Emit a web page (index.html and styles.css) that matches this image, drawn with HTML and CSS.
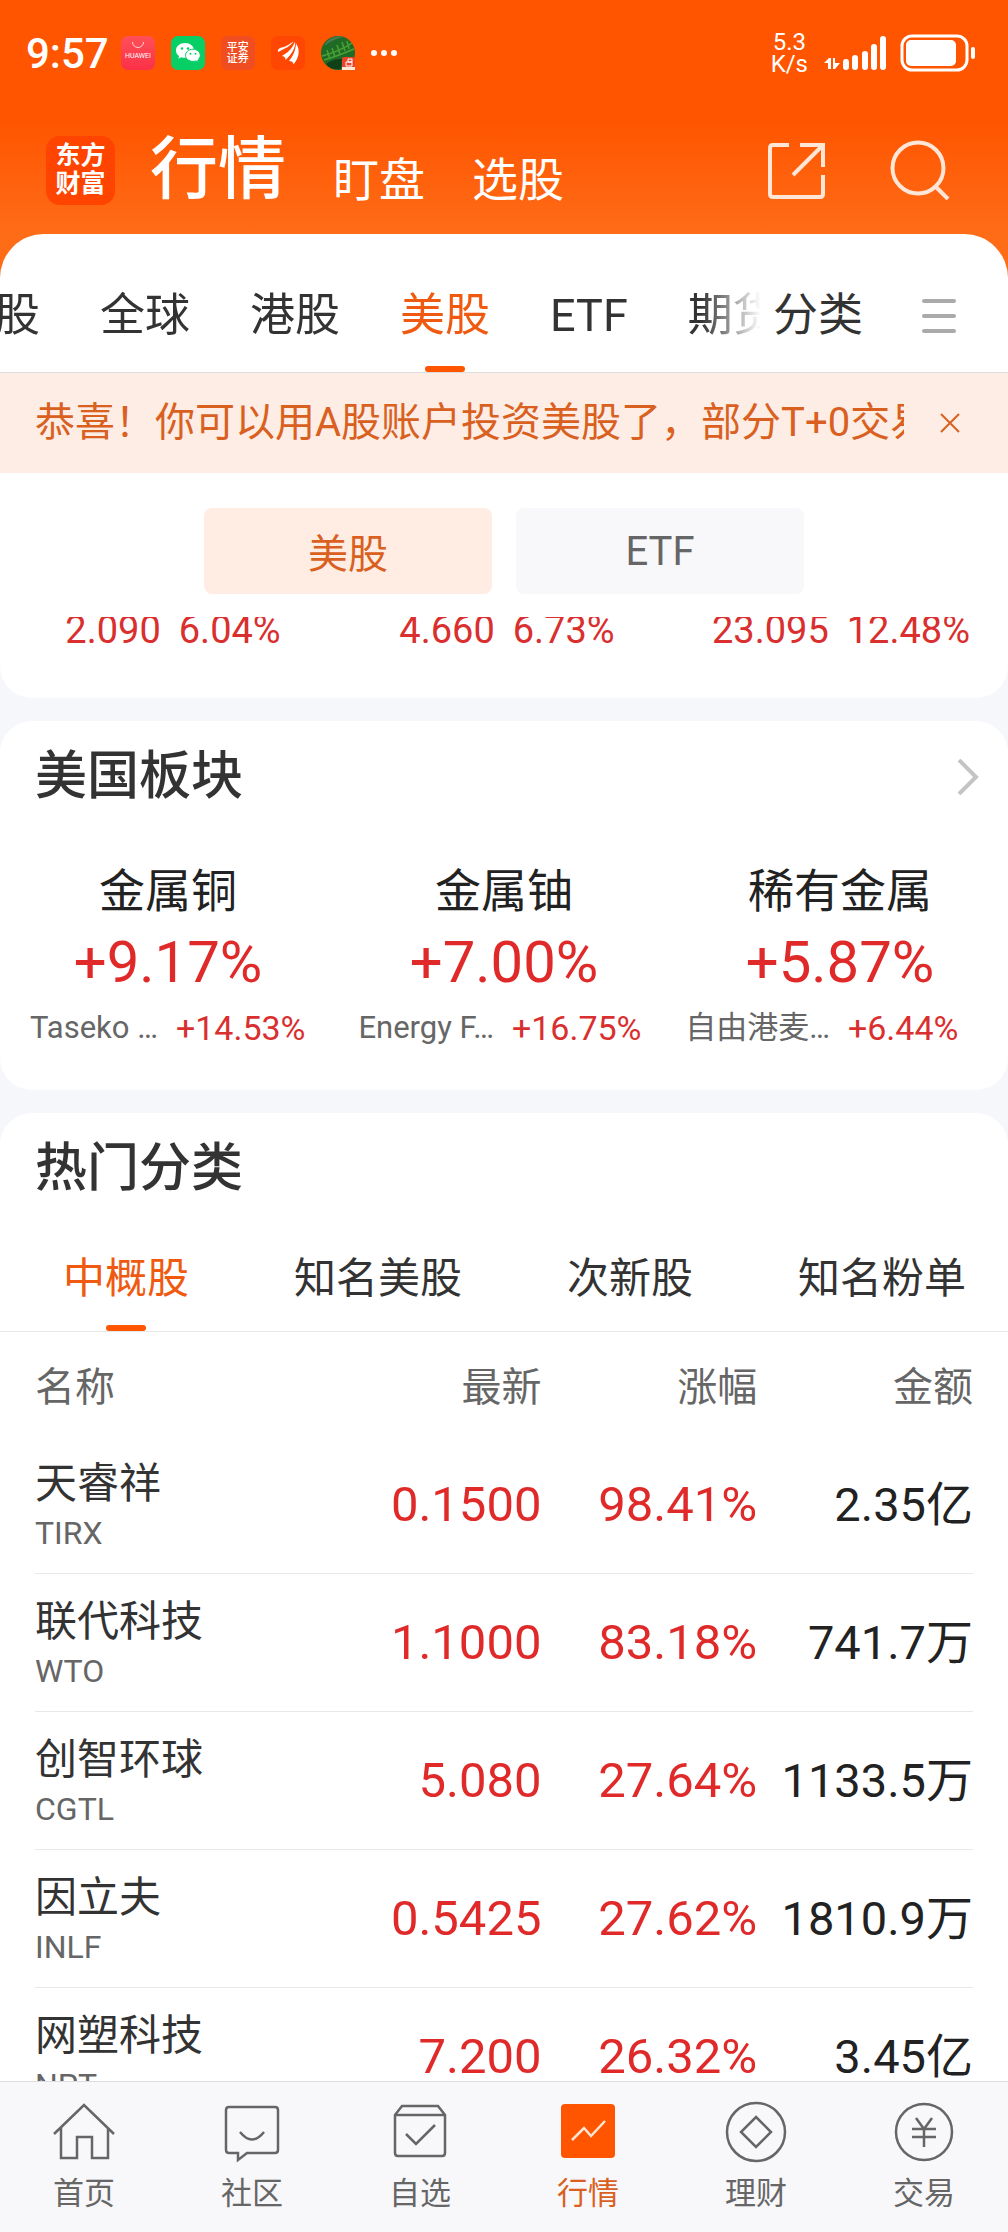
FILE: index.html
```html
<!DOCTYPE html>
<html lang="zh-CN">
<head>
    <meta charset="UTF-8">
    <meta name="viewport" content="width=device-width, initial-scale=1.0">
    <title>行情 | 东方财富</title>
    <link rel="stylesheet" href="styles.css">
</head>
<body>

    <header class="top">
        <div class="status-bar">
            <span class="time">9:57</span>
            <div class="notifications">
                <svg class="app-icon" viewBox="0 0 34 34">
                    <defs>
                        <linearGradient id="pink" x1="0" y1="0" x2="0" y2="1">
                            <stop offset="0" stop-color="#ff5058"/>
                            <stop offset="1" stop-color="#fb3048"/>
                        </linearGradient>
                    </defs>
                    <rect width="34" height="34" rx="7" fill="url(#pink)"/>
                    <path d="M11.500 6a5.500 5.500 0 0 0 11 0" fill="none" stroke="#ffd5d5" stroke-width="1"/>
                    <text x="17" y="22" class="huawei">HUAWEI</text>
                </svg>
                <svg class="app-icon" viewBox="0 0 34 34">
                    <rect width="34" height="34" rx="7" fill="#07cf66"/>
                    <path d="M14 7c-5.200 0-9 3.300-9 7.400 0 2.400 1.200 4.300 3.100 5.700l-.8 2.600 3-1.500c1.200.4 2.400.6 3.700.6 5.200 0 9-3.300 9-7.400S19.200 7 14 7z" fill="#fff"/>
                    <path d="M22 13.200c-4.300 0-7.500 2.800-7.500 6.100s3.200 6.100 7.500 6.100c1 0 2-.2 2.900-.5l2.600 1.400-.7-2.300c1.500-1.200 2.500-2.800 2.500-4.700 0-3.300-3-6.100-7.300-6.100z" fill="#fff" stroke="#07cf66" stroke-width="1"/>
                    <g fill="#07cf66">
                        <circle cx="11" cy="12.500" r="1.200"/><circle cx="17" cy="12.500" r="1.200"/>
                        <circle cx="19.500" cy="17.800" r="1"/><circle cx="24.500" cy="17.800" r="1"/>
                    </g>
                </svg>
                <span class="app-icon pingan">平安<br>证券</span>
                <svg class="app-icon" viewBox="0 0 34 34">
                    <rect width="34" height="34" rx="7" fill="#ff4602"/>
                    <g fill="#fff">
                        <path d="M7 16c-.6-3.500 1.600-4 5-4.800C16 10 19 8 22.500 5.200 20 10 14 12.500 7 16z"/>
                        <path d="M11 20c5-3 10-7 13-14.300 1 5.300-3 12.300-9.600 18.300.3-2-.6-3.400-3.400-4z"/>
                        <path d="M18 25c4-5 6.500-10 7-17.500C29.600 14 28 22 22.400 28.500c.2-2.300-1.400-3.400-4.400-3.500z"/>
                    </g>
                </svg>
                <svg class="app-icon" viewBox="0 0 34 34">
                    <circle cx="17" cy="17" r="17" fill="#1f6b26"/>
                    <path d="M3 10a17 17 0 0 1 20-9c-8 1-14 5-20 9z" fill="#4a7a50"/>
                    <g fill="none" stroke="#4aa035" stroke-width="1.500">
                        <path d="M1 20C10 18 24 12 31 7M3 24C14 21 26 16 33 13"/>
                        <path d="M6 14l3 9M11 12l3 9M16 9l3 9M21 6l3 9M26 5l2 8"/>
                    </g>
                    <path d="M5 28c5-4 10-5 16-5l-1 10C14 34 9 33 5 28z" fill="#0f4018"/>
                    <rect x="21" y="21" width="13" height="13" rx="2" fill="#e8452c"/>
                    <path d="M21 31h13v3H21z" fill="#ffe9d8"/>
                    <path d="M25 26h6v4h-6zM27 23h4v3h-4z" fill="none" stroke="#fff" stroke-width="1"/>
                </svg>
                <svg class="more-dots" viewBox="0 0 26 6" fill="#fff">
                    <circle cx="3" cy="3" r="3"/><circle cx="13" cy="3" r="3"/><circle cx="23" cy="3" r="3"/>
                </svg>
            </div>
            <span class="net-speed">5.3<br>K/s</span>
            <svg class="signal" viewBox="0 0 62 36" fill="#fff">
                <path d="M0 28l5-5h2v11H4v-6zM9 23h2v5h5l-5 6H9z"/>
                <rect x="19" y="24" width="6" height="11" rx="3"/>
                <rect x="28" y="20" width="6" height="15" rx="3"/>
                <rect x="38" y="16" width="6" height="19" rx="3"/>
                <rect x="47" y="9" width="6" height="26" rx="3"/>
                <rect x="56" y="1" width="6" height="34" rx="3"/>
            </svg>
            <svg class="battery" viewBox="0 0 76 38">
                <rect x="2" y="2" width="65" height="34" rx="10" fill="none" stroke="#fff" stroke-width="3"/>
                <rect x="6" y="6" width="50" height="26" rx="5" fill="#fff"/>
                <rect x="71" y="13" width="4" height="12" rx="2" fill="#fff"/>
            </svg>
        </div>

        <div class="app-bar">
            <a href="#" class="logo">东方<br>财富</a>
            <nav class="sections">
                <a href="#" class="current">行情</a>
                <a href="#">盯盘</a>
                <a href="#">选股</a>
            </nav>
            <button class="icon-button" aria-label="分享">
                <svg class="bar-icon" viewBox="0 0 60 60" fill="none" stroke="#ffe6d6" stroke-width="4">
                    <path d="M23 5H7q-3 0-3 3v46q0 3 3 3h47q3 0 3-3V35M34 5h23v22M56 6L27 35"/>
                </svg>
            </button>
            <button class="icon-button" aria-label="搜索">
                <svg class="bar-icon" viewBox="0 0 60 60" fill="none" stroke="#ffe6d6" stroke-width="4">
                    <circle cx="28" cy="28" r="25.500"/>
                    <path d="M46 47l12 12"/>
                </svg>
            </button>
        </div>
    </header>

    <main class="content">
        <nav class="market-tabs">
            <div class="tab-scroller">
                <a href="#">股</a>
                <a href="#">全球</a>
                <a href="#">港股</a>
                <a href="#" class="active">美股</a>
                <a href="#">ETF</a>
                <a href="#">期货</a>
            </div>
            <a href="#" class="category">分类</a>
            <button class="menu-button" aria-label="菜单">
                <svg viewBox="0 0 34 34" stroke="#aaa" stroke-width="4" stroke-linecap="round">
                    <path d="M2 2h30M2 17h30M2 32h30"/>
                </svg>
            </button>
        </nav>

        <div class="notice">
            <p>恭喜！你可以用A股账户投资美股了，部分T+0交易</p>
            <button aria-label="关闭">
                <svg viewBox="0 0 20 20" stroke="#d9601f" stroke-width="2">
                    <path d="M1 1l18 18M19 1L1 19"/>
                </svg>
            </button>
        </div>

        <section class="card quotes">
            <div class="switch">
                <button class="selected">美股</button>
                <button>ETF</button>
            </div>
            <div class="quote-clip">
                <div class="quote-row">
                    <p><span>2.090</span><span>6.04%</span></p>
                    <p><span>4.660</span><span>6.73%</span></p>
                    <p><span>23.095</span><span>12.48%</span></p>
                </div>
            </div>
        </section>

        <section class="card">
            <div class="card-title">
                <h2>美国板块</h2>
                <a href="#" aria-label="更多">
                    <svg viewBox="0 0 22 36" fill="none" stroke="#c4c4c4" stroke-width="4">
                        <path d="M2 1l17 17L2 35"/>
                    </svg>
                </a>
            </div>
            <div class="sectors">
                <div class="sector">
                    <h3>金属铜</h3>
                    <p class="sector-change">+9.17%</p>
                    <p class="leader"><span>Taseko …</span><b>+14.53%</b></p>
                </div>
                <div class="sector">
                    <h3>金属铀</h3>
                    <p class="sector-change">+7.00%</p>
                    <p class="leader"><span>Energy F…</span><b>+16.75%</b></p>
                </div>
                <div class="sector">
                    <h3>稀有金属</h3>
                    <p class="sector-change">+5.87%</p>
                    <p class="leader"><span>自由港麦…</span><b>+6.44%</b></p>
                </div>
            </div>
        </section>

        <section class="card">
            <div class="card-title">
                <h2>热门分类</h2>
            </div>
            <nav class="hot-tabs">
                <a href="#" class="active">中概股</a>
                <a href="#">知名美股</a>
                <a href="#">次新股</a>
                <a href="#">知名粉单</a>
            </nav>
            <div class="table-wrap">
                <table class="stocks">
                    <thead>
                        <tr><th>名称</th><th>最新</th><th>涨幅</th><th>金额</th></tr>
                    </thead>
                    <tbody>
                        <tr>
                            <td>天睿祥<small>TIRX</small></td>
                            <td class="up">0.1500</td><td class="up">98.41%</td><td class="amount">2.35亿</td>
                        </tr>
                        <tr>
                            <td>联代科技<small>WTO</small></td>
                            <td class="up">1.1000</td><td class="up">83.18%</td><td class="amount">741.7万</td>
                        </tr>
                        <tr>
                            <td>创智环球<small>CGTL</small></td>
                            <td class="up">5.080</td><td class="up">27.64%</td><td class="amount">1133.5万</td>
                        </tr>
                        <tr>
                            <td>因立夫<small>INLF</small></td>
                            <td class="up">0.5425</td><td class="up">27.62%</td><td class="amount">1810.9万</td>
                        </tr>
                        <tr>
                            <td>网塑科技<small>NPT</small></td>
                            <td class="up">7.200</td><td class="up">26.32%</td><td class="amount">3.45亿</td>
                        </tr>
                    </tbody>
                </table>
            </div>
        </section>
    </main>

    <nav class="bottom-nav">
        <a href="#">
            <svg viewBox="0 0 64 64">
                <path d="M2 34L32 5l30 29M9 28v30h16V37h15v21h16V28"/>
            </svg>
            首页
        </a>
        <a href="#">
            <svg viewBox="0 0 64 64">
                <path d="M9 7h46q3 0 3 3v40q0 3-3 3H27l-9 7v-7H9q-3 0-3-3V10q0-3 3-3zM20 32q12 15 24 0"/>
            </svg>
            社区
        </a>
        <a href="#">
            <svg viewBox="0 0 64 64">
                <path d="M7 15l7-9h36l7 9v38q0 3-3 3H10q-3 0-3-3zM7 15h50M18 34l10 10 19-19"/>
            </svg>
            自选
        </a>
        <a href="#" class="active">
            <svg viewBox="0 0 64 64">
                <rect x="5" y="4" width="54" height="54" rx="4" fill="#ff5500" stroke="none"/>
                <path d="M16 40l12-12 7 8 14-15" stroke="#ffe6d6"/>
            </svg>
            行情
        </a>
        <a href="#">
            <svg viewBox="0 0 64 64">
                <circle cx="32" cy="32" r="29"/>
                <path d="M32 17l15 15-15 15-15-15z"/>
            </svg>
            理财
        </a>
        <a href="#">
            <svg viewBox="0 0 64 64">
                <circle cx="32" cy="32" r="28"/>
                <path d="M24 18l8 11 8-11M32 29v18M20 29h24M20 37h24"/>
            </svg>
            交易
        </a>
    </nav>

</body>
</html>
```
FILE: styles.css
```css
* {
    box-sizing: border-box;
}

body {
    margin: 0;
    height: 100vh;
    display: flex;
    flex-direction: column;
    font-family: Roboto, "Noto Sans CJK SC", sans-serif;
    background: #f6f7fa;
    color: #333;
}

h2, h3, p {
    margin: 0;
    font-weight: normal;
}

a {
    color: inherit;
    text-decoration: none;
}

button {
    border: none;
    padding: 0;
    background: none;
    font-family: inherit;
    cursor: pointer;
}

svg {
    display: block;
}

/* Status bar and app bar */
.top {
    flex: none;
    padding-bottom: 48px;
    background: linear-gradient(#ff5500 120px, #ff6c18 234px);
    color: #fff;
}

.status-bar {
    display: flex;
    align-items: center;
    height: 106px;
    padding: 0 32px 0 26px;
}

.time {
    font-size: 42px;
    font-weight: 500;
}

.notifications {
    flex: 1;
    display: flex;
    align-items: center;
    gap: 16px;
    margin-left: 12px;
}

.app-icon {
    width: 34px;
    height: 34px;
}

.huawei {
    font-size: 7px;
    fill: #fff;
    text-anchor: middle;
}

.pingan {
    border-radius: 7px;
    background: #f04e22;
    font-size: 11px;
    font-weight: 500;
    line-height: 11px;
    padding-top: 6px;
    text-align: center;
}

.more-dots {
    width: 26px;
}

.net-speed {
    font-size: 24px;
    line-height: 22px;
    text-align: center;
}

.signal {
    width: 62px;
    margin: 0 14px 0 16px;
}

.battery {
    width: 76px;
}

.app-bar {
    display: flex;
    align-items: center;
    height: 128px;
    padding: 0 58px 0 46px;
}

.logo {
    width: 69px;
    height: 69px;
    padding-top: 6px;
    border-radius: 14px;
    background: #ff4400;
    font-size: 25px;
    font-weight: 700;
    line-height: 28px;
    text-align: center;
}

.sections {
    flex: 1;
    display: flex;
    align-items: flex-end;
    gap: 47px;
    margin-left: 35px;
    font-size: 46px;
    line-height: 72px;
}

.sections .current {
    font-size: 68px;
    font-weight: 500;
    line-height: 92px;
}

.icon-button {
    margin-left: 64px;
}

.bar-icon {
    width: 60px;
    height: 60px;
}

/* Scrolling part */
.content {
    flex: 1;
    min-height: 0;
    margin-top: -48px;
    overflow-y: auto;
    scrollbar-width: none;
    border-radius: 44px 44px 0 0;
}

.market-tabs {
    display: flex;
    height: 139px;
    padding-right: 52px;
    border-bottom: 1px solid #ddd;
    background: #fff;
    font-size: 45px;
    line-height: 60px;
}

.market-tabs a {
    flex: none;
    padding-top: 52px;
}

.tab-scroller {
    flex: 1;
    display: flex;
    gap: 60px;
    min-width: 0;
    margin-right: 12px;
    overflow: hidden;
    -webkit-mask-image: linear-gradient(to left, transparent, #000 60px);
    mask-image: linear-gradient(to left, transparent, #000 60px);
}

.tab-scroller a:first-child {
    margin-left: -5px;
}

.active {
    color: #f05a10;
}

.tab-scroller .active::after,
.hot-tabs .active::after {
    content: "";
    display: block;
    width: 40px;
    height: 6px;
    margin: 20px auto 0;
    border-radius: 3px;
    background: #ff5500;
}

.menu-button {
    width: 34px;
    margin: 25px 0 0 59px;
}

.notice {
    display: flex;
    align-items: center;
    height: 100px;
    padding: 0 48px 0 35px;
    background: #fdede4;
    color: #d9601f;
    font-size: 40px;
}

.notice p {
    flex: 1;
    overflow: hidden;
    line-height: 56px;
    white-space: nowrap;
}

.notice button {
    width: 20px;
    margin-left: 36px;
}

.card {
    margin-bottom: 23px;
    border-radius: 32px;
    background: #fff;
}

.quotes {
    padding: 35px 0 47px;
    border-radius: 0 0 32px 32px;
}

.switch {
    display: flex;
    justify-content: center;
    gap: 24px;
}

.switch button {
    width: 288px;
    height: 86px;
    border-radius: 8px;
    background: #f8f8fa;
    color: #666;
    font-size: 40px;
}

.switch .selected {
    background: #ffede4;
    color: #d9601f;
}

/* The first line of the list has scrolled under the switch */
.quote-clip {
    margin-top: 23px;
    overflow: hidden;
}

.quote-row {
    display: grid;
    grid-template-columns: repeat(3, 1fr);
    margin-top: -7px;
    padding: 0 0 1px 6px;
    color: #d92f2f;
    font-size: 38px;
    line-height: 40px;
}

.quote-row p {
    display: flex;
    justify-content: center;
    gap: 18px;
}

.card-title {
    display: flex;
    align-items: center;
    justify-content: space-between;
    padding: 24px 29px 0 35px;
}

.card-title h2 {
    font-size: 52px;
    font-weight: 500;
    line-height: 64px;
}

.card-title svg {
    width: 22px;
}

.sectors {
    display: grid;
    grid-template-columns: repeat(3, 1fr);
    padding: 51px 0 36px;
    text-align: center;
}

.sector h3 {
    color: #222;
    font-size: 46px;
    line-height: 62px;
}

.sector-change {
    color: #e02a2a;
    font-size: 58px;
    line-height: 80px;
}

.leader {
    display: grid;
    grid-template-columns: 47% 1fr;
    gap: 18px;
    color: #666;
    font-size: 31px;
    line-height: 52px;
    text-align: right;
    white-space: nowrap;
}

.leader b {
    color: #d92f2f;
    font-size: 34px;
    font-weight: normal;
    text-align: left;
}

.hot-tabs {
    display: grid;
    grid-template-columns: repeat(4, 1fr);
    height: 131px;
    padding-top: 48px;
    border-bottom: 1px solid #e8e8e8;
    font-size: 42px;
    line-height: 60px;
    text-align: center;
}

.hot-tabs .active::after {
    margin-top: 16px;
}

.table-wrap {
    padding: 0 35px;
}

.stocks {
    width: 100%;
    table-layout: fixed;
    border-collapse: collapse;
}

.stocks th {
    width: 23%;
    height: 104px;
    padding: 0;
    color: #666;
    font-size: 40px;
    font-weight: normal;
    text-align: right;
}

.stocks th:first-child {
    width: 31%;
    text-align: left;
}

.stocks td {
    padding: 0;
    border-bottom: 1px solid #e8e8e8;
    font-size: 49px;
    line-height: 60px;
    text-align: right;
    white-space: nowrap;
}

.stocks td:first-child {
    padding: 23px 0 16px;
    font-size: 42px;
    line-height: 50px;
    text-align: left;
}

.stocks small {
    display: block;
    color: #666;
    font-size: 32px;
    line-height: 48px;
}

.stocks .up {
    color: #e02a2a;
}

.stocks .amount {
    color: #222;
    font-size: 47px;
}

/* Bottom navigation */
.bottom-nav {
    flex: none;
    display: grid;
    grid-template-columns: repeat(6, 1fr);
    height: 151px;
    padding-top: 18px;
    border-top: 1px solid #ddd;
    background: #f8f8fa;
    color: #666;
    font-size: 31px;
    line-height: 60px;
    text-align: center;
}

.bottom-nav .active {
    color: #d9601f;
}

.bottom-nav svg {
    width: 64px;
    height: 64px;
    margin: 0 auto;
    fill: none;
    stroke: #666;
    stroke-width: 2.5px;
}
```
